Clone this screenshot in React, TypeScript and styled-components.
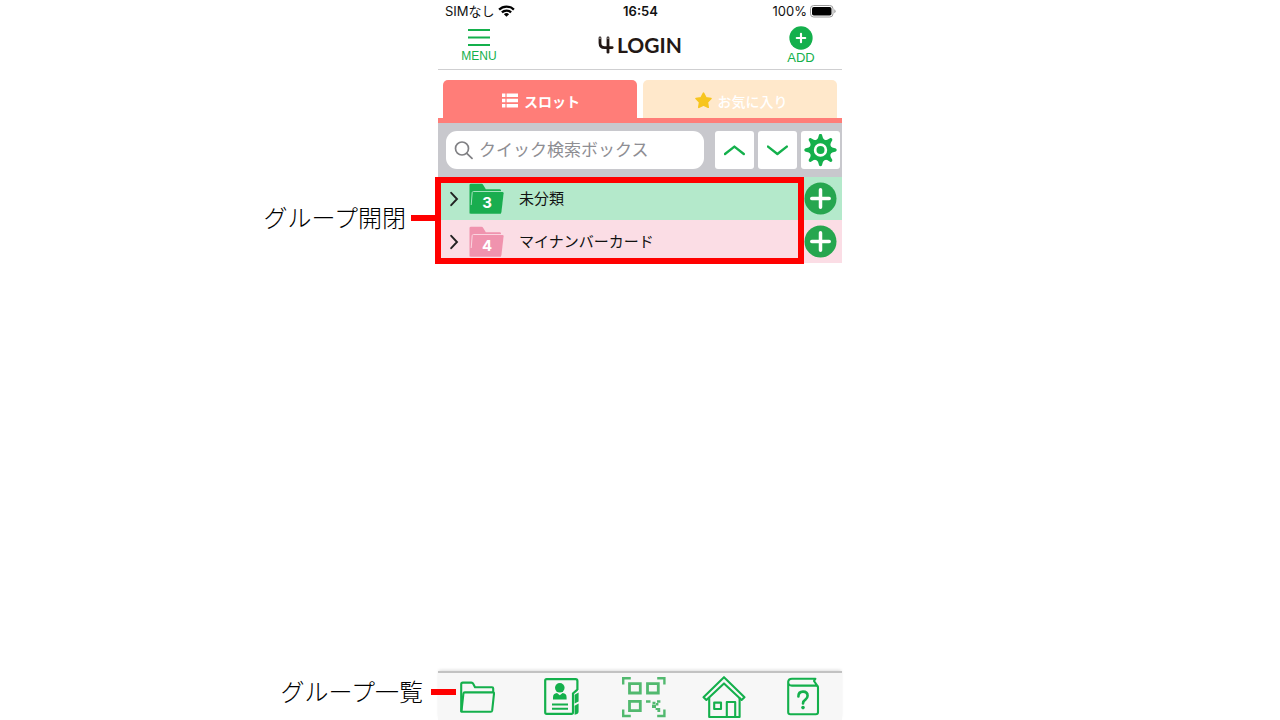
import React from "react";
import styled, { createGlobalStyle } from "styled-components";

const green = "#14b04c";
const coral = "#ff7d78";
const red = "#ff0000";

const GlobalStyle = createGlobalStyle`
  *, *::before, *::after { box-sizing: border-box; }
  body {
    margin: 0;
    background: #fff;
    color: #111;
    font-family: Inter, "Noto Sans CJK JP", sans-serif;
  }
  button, input { font: inherit; color: inherit; }
  button { border: 0; padding: 0; background: none; cursor: pointer; }
  svg { display: block; }
`;

const Page = styled.main`
  display: flex;
  justify-content: center;
  min-height: 100vh;
`;

const Phone = styled.div`
  display: flex;
  flex-direction: column;
  width: 100%;
  max-width: 404px;
`;

const StatusBar = styled.div`
  display: grid;
  grid-template-columns: 1fr auto 1fr;
  align-items: center;
  height: 22px;
  padding: 0 6px 0 7px;
  font-size: 13px;
  line-height: 22px;
`;

const StatusGroup = styled.div<{ $end?: boolean }>`
  display: flex;
  align-items: center;
  gap: 3px;
  justify-content: ${(p) => (p.$end ? "flex-end" : "flex-start")};
`;

const Clock = styled.time`
  font-weight: 600;
`;

const Header = styled.header`
  display: grid;
  grid-template-columns: 1fr auto 1fr;
  align-items: center;
  height: 48px;
  padding: 0 22px;
  border-bottom: 1px solid #cfcfd1;
`;

const HeaderButton = styled.button<{ $end?: boolean }>`
  display: flex;
  flex-direction: column;
  align-items: center;
  justify-self: ${(p) => (p.$end ? "end" : "start")};
  min-width: 38px;
  color: ${green};
  font-family: "Liberation Sans", Arial, sans-serif;
  font-size: ${(p) => (p.$end ? 13 : 12)}px;
  line-height: 16px;
`;

const Logo = styled.h1`
  display: flex;
  align-items: center;
  gap: 3px;
  margin: 0;
  padding-bottom: 2px;
  color: #231815;
  font-family: Lato, sans-serif;
  font-size: 21px;
  font-weight: 700;
  line-height: 24px;
`;

const Tabs = styled.div`
  display: flex;
  gap: 6px;
  padding: 10px 5px 0;
  border-bottom: 5px solid ${coral};
`;

const Tab = styled.button<{ $active?: boolean }>`
  display: flex;
  flex: 1;
  align-items: center;
  justify-content: center;
  gap: 6px;
  height: 38px;
  padding: 3px 0 0 2px;
  border-radius: 5px 5px 0 0;
  background: ${(p) => (p.$active ? coral : "#ffe8cb")};
  color: #fff;
  font-family: "Noto Sans CJK JP", sans-serif;
  font-size: 14px;
  font-weight: ${(p) => (p.$active ? 700 : 500)};
  line-height: 20px;
`;

const Toolbar = styled.div`
  display: flex;
  gap: 4px;
  height: 54px;
  padding: 8px 2px 8px 8px;
  background: #c8c8cd;
`;

const SearchBox = styled.label`
  display: flex;
  flex: 1;
  align-items: center;
  gap: 6px;
  min-width: 0;
  margin-right: 7px;
  padding: 0 8px;
  border-radius: 11px;
  background: #fff;
`;

const SearchInput = styled.input`
  flex: 1;
  min-width: 0;
  padding: 0 0 2px;
  border: 0;
  outline: 0;
  background: none;
  font-family: "Noto Sans CJK JP", sans-serif;
  font-size: 17px;
  line-height: 24px;
  &::placeholder { color: #8e8e93; opacity: 1; }
`;

const ToolButton = styled.button`
  display: grid;
  place-items: center;
  flex: none;
  width: 39px;
  border-radius: 3px;
  background: #fff;
`;

const Groups = styled.section`
  position: relative;
`;

const GroupRow = styled.div<{ $tint: string }>`
  display: flex;
  align-items: center;
  height: 43px;
  padding-right: 5px;
  background: ${(p) => p.$tint};
`;

const GroupToggle = styled.button`
  display: flex;
  flex: 1;
  align-items: center;
  height: 100%;
  padding-left: 12px;
  font-family: "Noto Sans CJK JP", sans-serif;
  font-size: 15px;
  line-height: 22px;
  text-align: left;
`;

const GroupName = styled.span`
  padding-bottom: 2px;
`;

const FolderBadge = styled.span`
  display: grid;
  margin: 0 14px 0 10px;
  > * { grid-area: 1 / 1; }
`;

const FolderCount = styled.span`
  padding-top: 9px;
  color: #fff;
  font-family: Inter, sans-serif;
  font-size: 15px;
  font-weight: 700;
  line-height: 22px;
  text-align: center;
`;

const Content = styled.div`
  flex: 1;
`;

const BottomNav = styled.nav`
  position: relative;
  display: grid;
  grid-template-columns: 84fr 79fr 81fr 84fr 56fr;
  align-items: center;
  justify-items: start;
  height: 49px;
  padding-left: 20px;
  border-top: 2px solid #c2c2c2;
  background: #f7f7f7;
  box-shadow: 0 -2px 3px -1px #ddd;
`;

const IconButton = styled.button`
  display: grid;
  place-items: center;
`;

const HighlightFrame = styled.div`
  position: absolute;
  inset: 0 38px -1px -3px;
  border: 6px solid ${red};
  pointer-events: none;
`;

const Callout = styled.div<{ $reach: number; $top: number }>`
  position: absolute;
  top: ${(p) => p.$top}px;
  right: calc(100% - ${(p) => p.$reach}px);
  display: flex;
  align-items: center;
  gap: ${(p) => (p.$reach > 0 ? 8 : 5)}px;
  color: #000;
  font-family: "Noto Sans CJK JP", sans-serif;
  font-size: 24px;
  font-weight: 300;
  line-height: 34px;
  white-space: nowrap;
  pointer-events: none;
  &::after {
    content: "";
    width: 25px;
    height: 6px;
    background: ${red};
  }
`;

const CalloutText = styled.span`
  padding-bottom: 2px;
`;

const WifiIcon = () => (
  <svg width="17" height="12" viewBox="0 0 17 12" aria-hidden="true">
    <g fill="none" stroke="#000" strokeWidth="2.3">
      <path d="M1.1 4.6A10.6 10.6 0 0 1 15.9 4.6" />
      <path d="M3.9 7.4A6.6 6.6 0 0 1 13.1 7.4" />
    </g>
    <path d="M8.5 11.8L5.9 9.3A3.8 3.8 0 0 1 11.1 9.3Z" />
  </svg>
);

const BatteryIcon = () => (
  <svg width="26" height="13" viewBox="0 0 26 13" aria-hidden="true">
    <rect x=".5" y=".5" width="22.5" height="11.5" rx="3.2" fill="none" stroke="#999" />
    <rect x="2" y="2" width="19.5" height="8.5" rx="1.8" />
    <path d="M24.3 4.3V8.3Q25.6 7.6 25.6 6.3T24.3 4.3Z" fill="#999" />
  </svg>
);

const MenuIcon = () => (
  <svg width="22" height="20" viewBox="0 0 22 20" aria-hidden="true">
    <path d="M0 2H22M0 9.5H22M0 17H22" stroke={green} strokeWidth="2" />
  </svg>
);

const PlusDisc = ({ size, fill, arm, weight }: { size: number; fill: string; arm: number; weight: number }) => (
  <svg width={size} height={size} viewBox="0 0 34 34" aria-hidden="true">
    <circle cx="17" cy="17" r="16.5" fill={fill} />
    <path
      d={`M${17 - arm} 17H${17 + arm}M17 ${17 - arm}V${17 + arm}`}
      stroke="#fff"
      strokeWidth={weight}
      strokeLinecap="round"
    />
  </svg>
);

const LogoMark = () => (
  <svg width="16" height="18" viewBox="0 0 16 18" aria-hidden="true">
    <g fill="none" stroke="#231815" strokeWidth="2.8" strokeLinecap="round" strokeLinejoin="round">
      <path d="M2 2V7Q2 11.6 6.6 11.6H14.2" />
      <path d="M10 2V16.2" />
    </g>
    <g fill="#fff">
      <circle cx="2" cy="2.2" r=".6" />
      <circle cx="10" cy="2.2" r=".6" />
    </g>
  </svg>
);

const ListIcon = () => (
  <svg width="16" height="15" viewBox="0 0 16 15" fill="#fff" aria-hidden="true">
    <path d="M0 .5H3.4V4H0ZM4.6 .5H16V4H4.6ZM0 5.7H3.4V9.2H0ZM4.6 5.7H16V9.2H4.6ZM0 10.9H3.4V14.4H0ZM4.6 10.9H16V14.4H4.6Z" />
  </svg>
);

const StarIcon = () => (
  <svg width="17" height="17" viewBox="0 0 17 17" aria-hidden="true">
    <path
      d="M8.5 1.2L10.9 5.7L16 6.5L12.4 10.2L13.2 15.3L8.5 13.1L3.8 15.3L4.6 10.2L1 6.5L6.1 5.7Z"
      fill="#f7c51e"
      stroke="#f7c51e"
      strokeWidth="1.6"
      strokeLinejoin="round"
    />
  </svg>
);

const SearchIcon = () => (
  <svg width="19" height="20" viewBox="0 0 19 20" aria-hidden="true">
    <g fill="none" stroke="#808084" strokeWidth="1.7" strokeLinecap="round">
      <circle cx="8" cy="8.5" r="6.5" />
      <path d="M12.8 13.3L18 18.4" />
    </g>
  </svg>
);

const ChevronIcon = ({ up }: { up?: boolean }) => (
  <svg width="22" height="12" viewBox="0 0 22 12" aria-hidden="true">
    <path
      d={up ? "M1 10L10.4 2.6L19.8 10" : "M1 2.6L10.4 10L19.8 2.6"}
      fill="none"
      stroke={green}
      strokeWidth="2.4"
      strokeLinecap="round"
      strokeLinejoin="round"
    />
  </svg>
);

const GearIcon = () => (
  <svg width="33" height="33" viewBox="-16.5 -16 33 33" aria-hidden="true">
    <g fill={green}>
      {[0, 45, 90, 135, 180, 225, 270, 315].map((angle) => (
        <path
          key={angle}
          d="M-4.2 -9.4Q-2.2 -11.2 -1.4 -15.4Q0 -17 1.4 -15.4Q2.2 -11.2 4.2 -9.4Z"
          transform={`rotate(${angle})`}
        />
      ))}
    </g>
    <circle r="8.8" fill="#fff" stroke={green} strokeWidth="4.2" />
    <circle r="4" fill={green} />
  </svg>
);

const DisclosureIcon = () => (
  <svg width="9" height="16" viewBox="0 0 9 16" aria-hidden="true">
    <path d="M1.2 1.8L7 8L1.2 14.2" fill="none" stroke="#222" strokeWidth="1.9" strokeLinecap="round" />
  </svg>
);

const FilledFolder = ({ color, line }: { color: string; line: string }) => (
  <svg width="36" height="32" viewBox="0 0 36 32" aria-hidden="true">
    <path
      d="M.5 2Q.5 .8 2 .8H12.4Q13.6 .8 14.4 2.2L16.8 6.2H30.6Q32 6.2 32 7.6V30.5H.5Z"
      fill={color}
    />
    <path d="M1.4 30.2L3.2 10.2Q3.4 9 4.6 9H33.4Q34.7 9 34.6 10.2L32.4 29.2Q32.2 30.6 31 30.6H1.4Z" fill={color} />
    <path d="M2.2 22L3.2 9.6Q3.4 8.5 4.6 8.5H33" fill="none" stroke={line} strokeWidth=".9" />
  </svg>
);

const NavFolderIcon = () => (
  <svg width="38" height="40" viewBox="0 0 38 40" aria-hidden="true">
    <g fill="none" stroke={green} strokeWidth="2.1" strokeLinejoin="round">
      <path d="M3.2 34.8V7.2Q3.2 5.6 4.8 5.6H13.4Q14.6 5.6 15.2 6.8L17 10.2H34Q35.2 10.2 35.2 11.4V15.4" />
      <path d="M3.4 34.8L5.4 16.6Q5.6 15.4 6.8 15.4H35Q36.2 15.4 36 16.6L34.2 33.4Q34 34.8 32.6 34.8Z" />
    </g>
  </svg>
);

const ContactsIcon = () => (
  <svg width="38" height="40" viewBox="0 0 38 40" aria-hidden="true">
    <g fill="none" stroke={green} strokeWidth="2.2">
      <path d="M35.4 13V4Q35.4 2.2 33.6 2.2H4.6Q3.2 2.2 3.2 3.6V35.2Q3.2 36.8 4.6 36.8H29.4Q31 36.8 31 35.2V16.4L35.4 12.6" />
      <path d="M10 27.4H26M10 31.8H26" strokeWidth="2" />
    </g>
    <g fill={green}>
      <circle cx="17.8" cy="10.8" r="4.8" />
      <path d="M11 22.6V20.4Q11 16.4 15 16L17.8 18.2L20.6 16Q24.6 16.4 24.6 20.4V22.6Z" />
      <path d="M32.6 17.8L36.6 15.4V24.4L32.6 26.6ZM32.6 28.8L36.6 26.6V34.6Q36.6 37.4 32.6 37.8Z" />
    </g>
  </svg>
);

const QrIcon = () => (
  <svg width="46" height="42" viewBox="0 0 46 42" aria-hidden="true">
    <g fill="none" stroke="#52b96f">
      <path d="M2.2 8.5V2.2H9.8M36.2 2.2H43.4V8.5M2.2 33.5V40H9.8M36.2 40H43.4V33.5" strokeWidth="2.4" />
      <path d="M8.5 7.6H19.3V17H8.5ZM26.5 7.6H37.3V17H26.5ZM8.5 25.4H19.3V34.6H8.5Z" strokeWidth="2.8" />
    </g>
    <path
      d="M25 24.3H29.5V26.8H25ZM31.5 25.8H34.5V28H31.5ZM36 24.3H39.4V26.8H36ZM31 28.4H35V32H31ZM35 27H37.4V29.5H35ZM34.6 32H36.8V34H34.6ZM36.4 32H39.2V36H36.4Z"
      fill="#52b96f"
    />
  </svg>
);

const HomeIcon = () => (
  <svg width="44" height="44" viewBox="0 0 44 44" aria-hidden="true">
    <g fill="none" stroke={green} strokeWidth="2.1" strokeLinejoin="round">
      <path d="M22 2.2L1.5 22.2L4.4 25L22 8.4L39.6 25L42.5 22.2Z" />
      <path d="M7.2 22.6V42H37.6V22.6" />
      <path d="M24.8 42V27H33.2V42M12.2 27.6H19V34H12.2Z" />
    </g>
  </svg>
);

const HelpBookIcon = () => (
  <svg width="34" height="40" viewBox="0 0 34 40" aria-hidden="true">
    <g fill="none" stroke={green} strokeWidth="2.1" strokeLinejoin="round" strokeLinecap="round">
      <path d="M2.2 4.6V35.2Q2.2 37.2 4.4 37.2H29.8Q32 37.2 32 35.2V10.4Q32 8.6 30.2 8.6H6Q2.2 8.6 2.2 5.2T6 1.8H29.4L28 4L31.4 8.8" />
      <path d="M12.4 19.4Q12.4 14.6 17 14.6T21.6 18.8Q21.6 21 19.4 22.6Q17 24.2 17 26.4" strokeWidth="2.6" />
    </g>
    <circle cx="17" cy="30.6" r="1.8" fill={green} />
  </svg>
);

const groups = [
  { name: "未分類", count: 3, tint: "#b4e9cb", color: "#19ad4f", line: "#b4e9cb" },
  { name: "マイナンバーカード", count: 4, tint: "#fbdde5", color: "#f093ae", line: "#fbdde5" },
];

const navItems = [
  { label: "グループ", Icon: NavFolderIcon },
  { label: "連絡先", Icon: ContactsIcon },
  { label: "QRコード", Icon: QrIcon },
  { label: "ホーム", Icon: HomeIcon },
  { label: "ヘルプ", Icon: HelpBookIcon },
];

export default function App() {
  return (
    <>
      <GlobalStyle />
      <Page>
        <Phone>
          <StatusBar>
            <StatusGroup>
              <span>SIMなし</span>
              <WifiIcon />
            </StatusGroup>
            <Clock>16:54</Clock>
            <StatusGroup $end>
              <span>100%</span>
              <BatteryIcon />
            </StatusGroup>
          </StatusBar>

          <Header>
            <HeaderButton type="button">
              <MenuIcon />
              MENU
            </HeaderButton>
            <Logo>
              <LogoMark />
              LOGIN
            </Logo>
            <HeaderButton type="button" $end>
              <PlusDisc size={24} fill={green} arm={6} weight={3} />
              ADD
            </HeaderButton>
          </Header>

          <Tabs role="tablist">
            <Tab type="button" role="tab" aria-selected="true" $active>
              <ListIcon />
              スロット
            </Tab>
            <Tab type="button" role="tab" aria-selected="false">
              <StarIcon />
              お気に入り
            </Tab>
          </Tabs>

          <Toolbar>
            <SearchBox>
              <SearchIcon />
              <SearchInput type="text" placeholder="クイック検索ボックス" aria-label="クイック検索ボックス" />
            </SearchBox>
            <ToolButton type="button" aria-label="閉じる">
              <ChevronIcon up />
            </ToolButton>
            <ToolButton type="button" aria-label="開く">
              <ChevronIcon />
            </ToolButton>
            <ToolButton type="button" aria-label="設定">
              <GearIcon />
            </ToolButton>
          </Toolbar>

          <Groups>
            {groups.map((g) => (
              <GroupRow key={g.name} $tint={g.tint}>
                <GroupToggle type="button" aria-expanded="false">
                  <DisclosureIcon />
                  <FolderBadge>
                    <FilledFolder color={g.color} line={g.line} />
                    <FolderCount>{g.count}</FolderCount>
                  </FolderBadge>
                  <GroupName>{g.name}</GroupName>
                </GroupToggle>
                <IconButton type="button" aria-label="追加">
                  <PlusDisc size={33} fill="#26a64f" arm={9} weight={3.6} />
                </IconButton>
              </GroupRow>
            ))}
            <HighlightFrame />
            <Callout $reach={-2} $top={23}>
              <CalloutText>グループ開閉</CalloutText>
            </Callout>
          </Groups>

          <Content />

          <BottomNav>
            {navItems.map(({ label, Icon }) => (
              <IconButton key={label} type="button" aria-label={label}>
                <Icon />
              </IconButton>
            ))}
            <Callout $reach={18} $top={1}>
              <CalloutText>グループ一覧</CalloutText>
            </Callout>
          </BottomNav>
        </Phone>
      </Page>
    </>
  );
}
